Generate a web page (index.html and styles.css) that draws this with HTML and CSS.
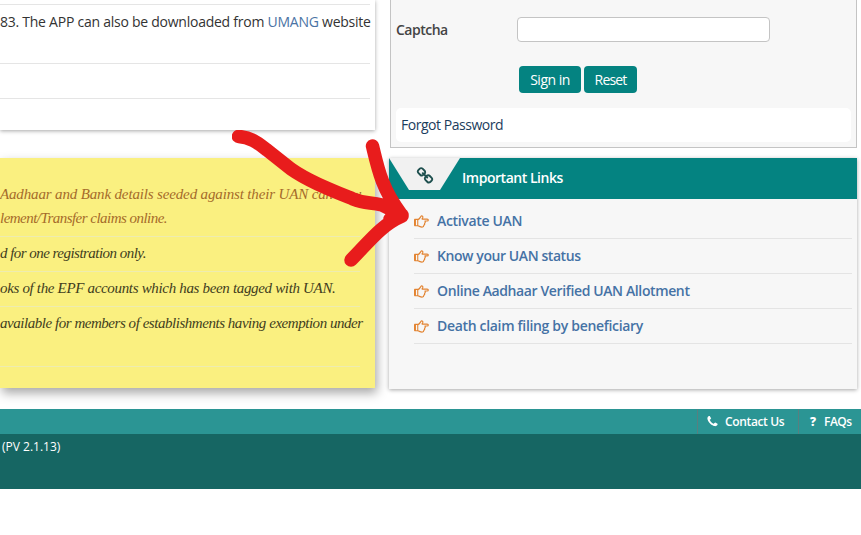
FILE: index.html
```html
<!DOCTYPE html>
<html lang="en">
<head>
<meta charset="utf-8">
<title>Important Links</title>
<link rel="stylesheet" href="styles.css">
</head>
<body>
<svg class="defs" width="0" height="0">
  <symbol id="hand" viewBox="0 0 14 12"><path d="M3.600 4.300C5 4 5.600 2.600 6.400 1.300C7 .4 8.500.8 8.200 2.200L7.500 3.700H12.300C13.700 3.700 13.700 5.500 12.300 5.500H10.200C10.800 6.500 10.500 7.200 9.900 7.600C10.200 8.500 9.800 9.100 9.200 9.500C9.200 10.700 8.500 11.200 7.500 11.200C5.800 11.200 5 10.300 3.600 10" fill="none" stroke="currentColor" stroke-width="1.100" stroke-linejoin="round"/><path d="M.9 4H3.500V10H.9z" fill="none" stroke="currentColor"/><path d="M.9 4V10" stroke="currentColor" stroke-width="1.800"/></symbol>
</svg>
<main class="page">
  <section class="left">
    <ul class="news card">
      <li class="first"></li>
      <li class="tall"><span class="t-news">83. The APP can also be downloaded from <a>UMANG</a> website</span></li>
      <li class="blank"></li>
    </ul>
    <ul class="notes">
      <li class="accent"><span class="n1">Aadhaar and Bank details seeded against their UAN can now</span><br><span class="n2">lement/Transfer claims online.</span></li>
      <li><span class="n3">d for one registration only.</span></li>
      <li><span class="n4">oks of the EPF accounts which has been tagged with UAN.</span></li>
      <li class="double"><span class="n5">available for members of establishments having exemption under</span></li>
    </ul>
  </section>
  <section class="right">
    <form class="login">
      <div class="row"><label class="t-cap">Captcha</label><input type="text"></div>
      <div class="buttons"><button type="button"><span class="t-sign">Sign in</span></button><button type="button" class="reset"><span class="t-reset">Reset</span></button></div>
      <div class="forgot"><span class="t-forgot">Forgot Password</span></div>
    </form>
    <div class="links card">
      <header>
        <div class="tab"><svg width="18" height="18" viewBox="0 0 1792 1792"><path fill="currentColor" d="M1520 1216q0-40-28-68l-208-208q-28-28-68-28-42 0-72 32 3 3 19 18.5t21.5 21.5 15 19 13 25.5 3.5 27.5q0 40-28 68t-68 28q-15 0-27.5-3.5t-25.5-13-19-15-21.500-21.500-18.500-19q-33 31-33 73 0 40 28 68l206 207q27 27 68 27 40 0 68-26l147-146q28-28 28-67zm-703-705q0-40-28-68l-206-207q-28-28-68-28-39 0-68 27l-147 146q-28 28-28 67 0 40 28 68l208 208q27 27 68 27 42 0 72-31-3-3-19-18.500t-21.500-21.500-15-19-13-25.500-3.500-27.500q0-40 28-68t68-28q15 0 27.500 3.500t25.500 13 19 15 21.500 21.500 18.500 19q33-31 33-73zm895 705q0 120-85 203l-147 146q-83 83-203 83-121 0-204-85l-206-207q-83-83-83-203 0-123 88-209l-88-88q-86 88-208 88-120 0-204-84l-208-208q-84-84-84-204t85-203l147-146q83-83 203-83 121 0 204 85l206 207q83 83 83 203 0 123-88 209l88 88q86-88 208-88 120 0 204 84l208 208q84 84 84 204z"/></svg></div>
        <h2 class="t-imp">Important Links</h2>
      </header>
      <ul>
        <li><svg><use href="#hand"/></svg><a class="l1">Activate UAN</a></li>
        <li><svg><use href="#hand"/></svg><a class="l2">Know your UAN status</a></li>
        <li><svg><use href="#hand"/></svg><a class="l3">Online Aadhaar Verified UAN Allotment</a></li>
        <li><svg><use href="#hand"/></svg><a class="l4">Death claim filing by beneficiary</a></li>
      </ul>
    </div>
  </section>
</main>
<footer>
  <nav>
    <a class="contact"><svg width="13" height="13" viewBox="0 0 1792 1792"><path fill="currentColor" d="M1600 1240q0 27-10 70.500t-21 68.500q-21 50-122 106-94 51-186 51-27 0-53-3.500t-57.500-12.500-47-14.500-55.500-20.500-49-18q-98-35-175-83-127-79-264-216t-216-264q-48-77-83-175-3-9-18-49t-20.500-55.500-14.500-47-12.500-57.500-3.500-53q0-92 51-186 56-101 106-122 25-11 68.500-21t70.500-10q14 0 21 3 18 6 53 76 11 19 30 54t35 63.500 31 53.500q3 4 17.500 25t21.500 35.500 7 28.500q0 20-28.500 50t-62 55-62 53-28.500 46q0 9 5 22.500t8.500 20.500 14 24 11.500 19q76 137 174 235t235 174q2 1 19 11.500t24 14 20.500 8.500 22.500 5q18 0 46-28.500t53-62 55-62 50-28.500q14 0 28.500 7t35.500 21.500 25 17.500q25 15 53.500 31t63.500 35 54 30q70 35 76 53 3 7 3 21z"/></svg><span class="t-con">Contact Us</span></a>
    <a class="faq"><b>?</b><span class="t-faq">FAQs</span></a>
  </nav>
  <p><span class="t-pv">(PV 2.1.13)</span></p>
</footer>
<svg class="arrow" width="180" height="140" viewBox="232 130 180 140"><path d="M238.500 136.500C251 137 259 144 267 150L291 169C308 181 331 190 353 199C365 204 370 202 382 205L402 215M372.500 146C378 169 382 189 401 214M402 216C381 225 368 243 351 260M391 201L401 216L390 219" fill="none" stroke="#e81c1c" stroke-width="13.500" stroke-linecap="round" stroke-linejoin="round"/></svg>
</body>
</html>
```
FILE: styles.css
```css
* { box-sizing: border-box; }
body { margin: 0; width: 861px; height: 535px; overflow: hidden; background: #fff; color: #333; font: 14px/20px "Open Sans", "Noto Sans", sans-serif; }
ul { list-style: none; margin: 0; padding: 0; }
span, a, h2, label { white-space: nowrap; }
.defs { position: absolute; }
.page { display: grid; grid-template-columns: 375px 468px; column-gap: 14px; height: 409px; }
.left { display: flex; flex-direction: column; gap: 28px; }
.card { box-shadow: 0 1px 4px rgba(0,0,0,.35); }
.news { height: 130px; padding-right: 5px; background: #fff; }
.news li { border-bottom: 1px solid #e5e5e5; }
.news .first { height: 5px; }
.news .tall { height: 59px; padding-top: 7px; }
.news .blank { height: 35px; }
.news a { color: #4a73a4; }
.t-news { letter-spacing: -.25px; }
.notes { height: 230px; padding: 24px 15px 0 0; background: #faf080; color: #413d1d; box-shadow: 2px 5px 10px rgba(0,0,0,.35); font: italic 15px/24px "Monotype Corsiva", "Liberation Serif", serif; }
.notes li { height: 35px; padding-top: 4px; border-bottom: 1px solid #eeecb0; }
.notes .accent { height: 55px; padding-top: 0; color: #a56b2a; }
.notes .double { height: 60px; }
.notes span { display: inline-block; }
.n1 { letter-spacing: -.15px; }
.n2, .n3 { letter-spacing: -.53px; }
.n4 { letter-spacing: -.33px; }
.n5 { letter-spacing: -.46px; }
.right { display: flex; flex-direction: column; gap: 10px; }
.login { width: 467px; height: 148px; margin-left: 1px; border: 1px solid #c4c4c4; border-top: 0; background: #f7f7f7; padding: 17px 5px 0; }
.row { display: flex; align-items: center; height: 25px; }
.row label { width: 121px; font-weight: 600; color: #444; letter-spacing: -.5px; }
input { width: 253px; height: 25px; border: 1px solid #c4c4c4; border-radius: 4px; background: #fff; }
.buttons { display: flex; gap: 3px; padding: 24px 0 0 123px; }
button { width: 62px; height: 27px; padding: 0; border: 0; border-radius: 4px; background: #048381; color: #fff; font: inherit; letter-spacing: -.5px; }
button.reset { width: 53px; letter-spacing: -.85px; }
.forgot { height: 34px; margin-top: 15px; padding: 7px 5px; border-radius: 5px; background: #fff; color: #1b3c5c; letter-spacing: -.47px; }
.links { height: 231px; background: #f7f7f7; }
.links header { display: flex; height: 41px; background: #048381; }
.tab { width: 71px; height: 32px; padding: 9px 0 0 27px; background: #f1f1f1; clip-path: polygon(0 0, 100% 0, 51px 100%, 20px 100%); color: #1f504f; }
.tab svg { display: block; }
.links h2 { margin: 10px 0 0 2px; color: #fff; font-size: 14px; line-height: 20px; font-weight: 600; letter-spacing: -.47px; }
.links ul { padding: 5px 5px 0 25px; }
.links li { display: flex; align-items: center; height: 35px; border-bottom: 1px solid #e4e4e4; }
.links li svg { width: 15px; height: 13px; margin-right: 8px; color: #e38432; }
.links li a { font-weight: 600; color: #4572a5; }
.l1 { letter-spacing: -.33px; }
.l2 { letter-spacing: -.42px; }
.l3 { letter-spacing: -.38px; }
.l4 { letter-spacing: -.32px; }
footer { height: 80px; background: #166663; color: #fff; font-size: 12px; }
nav { display: flex; justify-content: flex-end; height: 25px; background: #2b9594; font-weight: 600; }
nav a { display: flex; align-items: center; border-left: 1px solid #587f80; }
.contact { width: 101px; padding-left: 8px; }
.contact svg { margin-right: 6px; }
.t-con { letter-spacing: -.35px; }
.faq { width: 63px; padding-left: 11px; }
.faq b { width: 14px; font-weight: 800; }
.t-faq { letter-spacing: -.5px; }
footer p { margin: 0; padding: 3px 2px; }
.arrow { position: absolute; left: 232px; top: 130px; }
```
